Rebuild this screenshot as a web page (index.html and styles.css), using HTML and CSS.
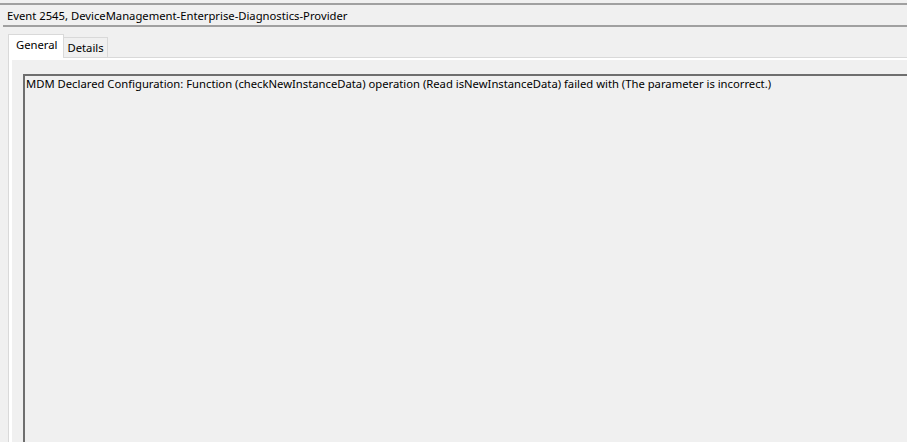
FILE: index.html
```html
<!DOCTYPE html>
<html>
<head>
<meta charset="utf-8">
<link rel="stylesheet" href="styles.css">
</head>
<body>
<div class="window">
  <div class="title">Event 2545, DeviceManagement-Enterprise-Diagnostics-Provider</div>
  <div class="body">
    <div class="tabs">
      <div class="tab active">General</div>
      <div class="tab">Details</div>
    </div>
    <div class="pane">
      <div class="page">
        <div class="textbox">MDM Declared Configuration: Function (checkNewInstanceData) operation (Read isNewInstanceData) failed with (The parameter is incorrect.)</div>
      </div>
    </div>
  </div>
</div>
</body>
</html>
```
FILE: styles.css
```css
html, body {
  margin: 0;
  padding: 0;
  background: #f0f0f0;
  height: 100%;
  overflow: hidden;
}
.window {
  margin-top: 3px;
  border-top: 2px solid #a0a0a0;
  height: calc(100% - 5px);
  display: flex;
  flex-direction: column;
  font-family: "Noto Sans", "Open Sans", sans-serif;
  font-size: 11.25px;
  color: #000;
}
.title {
  height: 20px;
  line-height: 21px;
  margin-left: 3px;
  border-bottom: 2px solid #a0a0a0;
  padding-left: 4px;
}
.body {
  flex: 1;
  display: flex;
  flex-direction: column;
  padding: 8px 0 0 8px;
}
.tabs {
  display: flex;
  align-items: flex-end;
  height: 22px;
}
.tab {
  border: 1px solid #d9d9d9;
  border-bottom: none;
  background: #f0f0f0;
  height: 19px;
  line-height: 19px;
  padding: 0 3px 0 3px;
}
.tab.active {
  background: #fff;
  line-height: 20px;
  padding: 0 6px 0 7px;
  position: relative;
  z-index: 1;
  margin-bottom: -1px;
  height: 23px;
}
.tab.active + .tab {
  margin-left: -1px;
}
.pane {
  flex: 1;
  border-left: 1px solid #d9d9d9;
  border-top: 1px solid #d9d9d9;
  background: #fff;
  padding: 2px 0 0 3px;
  display: flex;
}
.page {
  flex: 1;
  background: #f0f0f0;
  padding: 14px 0 0 11px;
  display: flex;
}
.textbox {
  flex: 1;
  border-left: 2px solid #6e6e6e;
  border-top: 2px solid #6e6e6e;
  padding: 0 0 0 1px;
  white-space: nowrap;
  line-height: 16px;
}
```
